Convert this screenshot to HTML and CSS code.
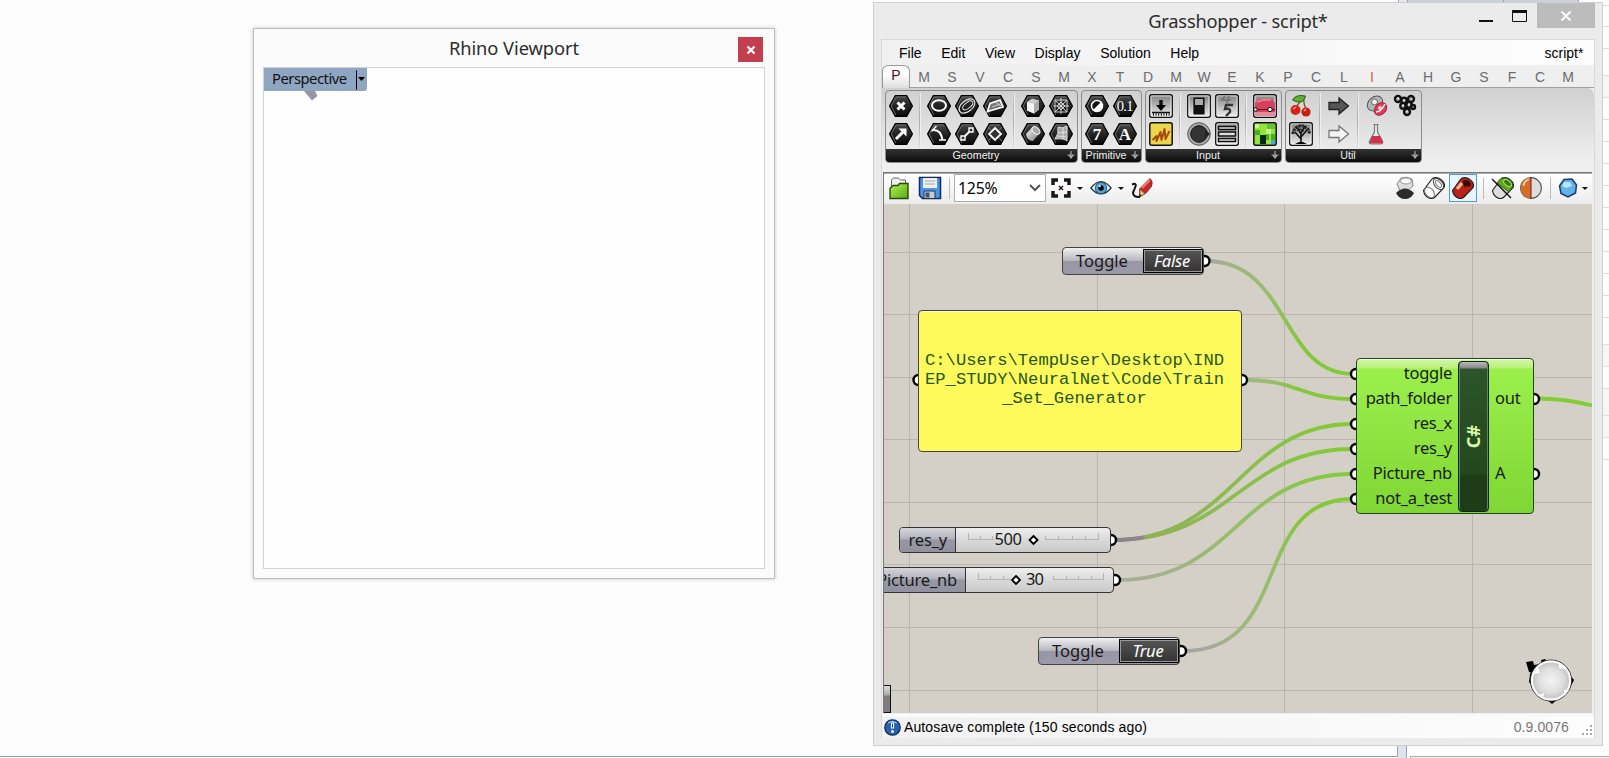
FILE: index.html
```html
<!DOCTYPE html>
<html lang="en">
<head>
<meta charset="utf-8">
<title>Grasshopper - script*</title>
<link rel="stylesheet" href="styles.css">
</head>
<body>
<svg class="defs" width="0" height="0">
  <defs>
    <linearGradient id="hexFill" x1="0" y1="0" x2="0" y2="1"><stop offset="0" stop-color="#4a4a4a"/><stop offset=".45" stop-color="#262626"/><stop offset="1" stop-color="#0a0a0a"/></linearGradient>
    <linearGradient id="tileFill" x1="0" y1="0" x2="0" y2="1"><stop offset="0" stop-color="#808080"/><stop offset="1" stop-color="#f0f0f0"/></linearGradient>
    <linearGradient id="metal" x1="0" y1="0" x2="1" y2="1"><stop offset="0" stop-color="#fff"/><stop offset="1" stop-color="#777"/></linearGradient>
    <linearGradient id="greenFill" x1="0" y1="0" x2="1" y2="1"><stop offset="0" stop-color="#b4ef52"/><stop offset="1" stop-color="#57ab16"/></linearGradient>
    <symbol id="hex" viewBox="0 0 24 24"><path d="M6.300 1.600h11.400L23.400 12l-5.700 10.400H6.300L.6 12z" fill="url(#hexFill)" stroke="#000" stroke-width="1.200"/><path d="M6.800 21 2.300 12 7 3h10" fill="none" stroke="#777" stroke-width=".8"/></symbol>
    <symbol id="tile" viewBox="0 0 24 24"><rect x=".8" y=".8" width="22.400" height="22.400" rx="2" fill="url(#tileFill)" stroke="#111" stroke-width="1.500"/><rect x="1.900" y="1.900" width="20.200" height="20.200" rx="1" fill="none" stroke="#fff" stroke-width=".8"/></symbol>
    <symbol id="tube" viewBox="0 0 24 24"><path d="M1.500 14.500 9.500 3.500Q11 1.500 14 1.700q6.500 1 8.500 7 .3 2-1 3.500L13 21q-2 2-5 1.300-5.500-1.500-6.500-7.800z" stroke="#222" stroke-width="1.200" stroke-linejoin="round"/></symbol>
  </defs>
</svg>

<div class="desktop">
  <div class="backdrop">
    <div class="strip-top"><i></i><b></b><b></b></div>
    <div class="sheet"><i class="r21"></i><i class="r22"></i><i class="r27"></i><i class="r22 tint"></i><i class="r22"></i><i class="r22"></i><i class="r22"></i><i class="r22"></i><i class="r22"></i><i class="r22"></i><i class="r22"></i><i class="r22"></i><i class="r22"></i><i class="r22"></i><i class="r27"></i><i class="r22 tint"></i><i class="r22"></i><i class="r27 tint"></i><i class="r22 tint"></i><i class="r22"></i><i class="r22"></i></div>
    <div class="strip-bottom"><i></i><b></b><u></u></div>
  </div>

  <section class="rhino">
    <header class="rhino-bar"><span class="rhino-title">Rhino Viewport</span>
      <span class="rhino-close"><svg width="10" height="10" viewBox="0 0 10 10"><path d="M1.500 1.500l7 7M8.500 1.500l-7 7" stroke="#fff" stroke-width="2.200"/></svg></span></header>
    <div class="rhino-view">
      <div class="view-tag"><span>Perspective</span><svg width="11" height="23" viewBox="0 0 11 23"><path d="M.5 2.500v19" stroke="#000"/><path d="M2 9h7L5.500 13z"/></svg></div>
      <svg class="view-nub" width="16" height="10" viewBox="0 0 16 10"><path d="M1 0h11l2.500 5L9 9.500z" fill="#9895a3"/></svg>
    </div>
  </section>

  <section class="gh">
    <header class="gh-bar"><span class="gh-title">Grasshopper - script*</span>
      <div class="controls">
        <svg width="14" height="12" viewBox="0 0 14 12"><path d="M0 10h14" stroke="#111" stroke-width="2"/></svg>
        <svg width="16" height="13" viewBox="0 0 16 13"><path d="M.5 1v10.500h14V1" fill="none" stroke="#111"/><path d="M0 1.500h15" stroke="#111" stroke-width="3"/></svg>
        <span class="gh-close"><svg width="12" height="10" viewBox="0 0 12 10"><path d="M1.500.5l9 9M10.500.5l-9 9" stroke="#fff" stroke-width="2"/></svg></span>
      </div></header>

    <div class="gh-inner">
      <nav class="menu"><span>File</span><span>Edit</span><span>View</span><span>Display</span><span>Solution</span><span>Help</span><span class="doc">script*</span></nav>
      <div class="tabs"><span class="on">P</span><span>M</span><span>S</span><span>V</span><span>C</span><span>S</span><span>M</span><span>X</span><span>T</span><span>D</span><span>M</span><span>W</span><span>E</span><span>K</span><span>P</span><span>C</span><span>L</span><span class="warm">I</span><span>A</span><span>H</span><span>G</span><span>S</span><span>F</span><span>C</span><span>M</span></div>

      <div class="ribbon">
        <div class="group">
          <div class="icons">
            <div class="col one">
              <svg viewBox="0 0 24 24"><use href="#hex"/><path d="M8.500 8.500l7 7M15.500 8.500l-7 7" stroke="#fff" stroke-width="3"/></svg>
              <svg viewBox="0 0 24 24"><use href="#hex"/><path d="M7 17l7-7" stroke="#fff" stroke-width="3"/><path d="M9.500 6.500h8v8z" fill="#fff"/></svg>
            </div><i class="sep"></i>
            <div class="col three">
              <svg viewBox="0 0 24 24"><use href="#hex"/><ellipse cx="12" cy="11.500" rx="7" ry="5.300" fill="none" stroke="#fff" stroke-width="2"/></svg>
              <svg viewBox="0 0 24 24"><use href="#hex"/><g fill="none" stroke="#ddd" transform="rotate(-38 12 12)"><ellipse cx="12" cy="12" rx="9" ry="5.500" stroke-width="1.300"/><ellipse cx="13" cy="12" rx="6" ry="2.800"/></g></svg>
              <svg viewBox="0 0 24 24"><use href="#hex"/><path d="M4.500 17.500 7 9.500 17 6l3 7z" fill="#777" stroke="#fff" stroke-width="1.700"/><path d="M12 8l6 4M9 13l8-3" stroke="#ddd" stroke-width=".8"/></svg>
              <svg viewBox="0 0 24 24"><use href="#hex"/><path d="M5 8q9-1 10.500 10" fill="none" stroke="#fff" stroke-width="2"/><path d="M9.500 4 4.500 9.500M12 18h7" stroke="#fff" stroke-width="1.400" fill="none"/></svg>
              <svg viewBox="0 0 24 24"><use href="#hex"/><path d="M8 16l8-8" stroke="#fff" stroke-width="2"/><path d="M6 14h4v4H6zM14 6h4v4h-4z" fill="#333" stroke="#fff" stroke-width="1.400"/></svg>
              <svg viewBox="0 0 24 24"><use href="#hex"/><path d="M5 5l14 14M19 5 5 19" stroke="#777" stroke-width="1"/><path d="M12 6l6 6-6 6-6-6z" fill="#333" stroke="#fff" stroke-width="1.800"/></svg>
            </div><i class="sep"></i>
            <div class="col two">
              <svg viewBox="0 0 24 24"><use href="#hex"/><path d="M6 8l5-3.500 7 2v9l-5 4-7-3z" fill="#ccc"/><path d="M6 8l7 2v9.500l-7-3z" fill="#f4f4f4"/><path d="M13 10l5-3.500v9l-5 4z" fill="#aaa"/></svg>
              <svg viewBox="0 0 24 24"><use href="#hex"/><path d="M6 6h12v12H6zM4 12h16M12 4v16M6 6l12 12M18 6 6 18M12 8l4 4-4 4-4-4z" fill="none" stroke="#ddd" stroke-width=".9"/></svg>
              <svg viewBox="0 0 24 24"><use href="#hex"/><path d="M5 12l7-7.500q6 0 7 6L12 19q-6 0-7-7z" fill="url(#metal)"/><ellipse cx="15" cy="8.500" rx="4.500" ry="3" transform="rotate(45 15 8.500)" fill="#aaa" stroke="#eee"/></svg>
              <svg viewBox="0 0 24 24"><use href="#hex"/><path d="M9 5q5 2 9-1v15q-3-3-12-2 4-5 3-12z" fill="#aaa" stroke="#ddd"/><path d="M14 6v11M9 11l9-1M8 14l10 1" stroke="#eee" stroke-width=".8"/></svg>
            </div>
          </div>
          <footer><span>Geometry</span><svg class="plus" viewBox="0 0 8 8"><path d="M4 0v7M.5 4h7M2 4.500l2 2.500 2-2.500" fill="none" stroke="#aaa" stroke-width="1.200"/></svg></footer>
        </div>

        <div class="group">
          <div class="icons"><div class="col two">
            <svg viewBox="0 0 24 24"><use href="#hex"/><circle cx="12" cy="12" r="5.500" fill="#111" stroke="#fff" stroke-width="1.500"/><path d="M16 8a5.500 5.500 0 0 1-8 8z" fill="#fff"/></svg>
            <svg viewBox="0 0 24 24"><use href="#hex"/><text class="glyph small" x="11.700" y="17">0.1</text></svg>
            <svg viewBox="0 0 24 24"><use href="#hex"/><text class="glyph" x="12" y="18">7</text></svg>
            <svg viewBox="0 0 24 24"><use href="#hex"/><text class="glyph" x="12" y="18">A</text></svg>
          </div></div>
          <footer><span>Primitive</span><svg class="plus" viewBox="0 0 8 8"><path d="M4 0v7M.5 4h7M2 4.500l2 2.500 2-2.500" fill="none" stroke="#aaa" stroke-width="1.200"/></svg></footer>
        </div>

        <div class="group">
          <div class="icons">
            <div class="col one">
              <svg viewBox="0 0 24 24"><use href="#tile"/><path d="M12 6v6" stroke="#111" stroke-width="3.500"/><path d="M7 11h10L12 17z"/><path d="M3 18.500h18" stroke="#111" stroke-width="1.500"/><path d="M4 20.500h17" stroke="#111" stroke-width="2.500" stroke-dasharray="1 1.600"/></svg>
              <svg viewBox="0 0 24 24"><rect x=".8" y=".8" width="22.400" height="22.400" rx="2" fill="#ead54c" stroke="#111" stroke-width="1.500"/><path d="M3.500 18l4-4 0 5 4-9 1 8 3-11 1 10 4-8" fill="none" stroke="#aa4b0b" stroke-width="2" stroke-linejoin="round"/></svg>
            </div><i class="sep"></i>
            <div class="col two">
              <svg viewBox="0 0 24 24"><use href="#tile"/><path d="M7 4h10v16H7z" fill="#111" stroke="#111" stroke-width="1.200"/><path d="M8 5h8v6H8z" fill="#aaa"/></svg>
              <svg viewBox="0 0 24 24"><use href="#tile"/><path d="M10 2 7 6h9M14 2l-2 7" fill="none" stroke="#777" stroke-width="2"/><path d="M18 11h-7l-1 4q6-1 5 3l-4 4" fill="none" stroke="#333" stroke-width="2.400"/></svg>
              <svg viewBox="0 0 24 24"><circle cx="12" cy="12" r="11.300" fill="#aaa" stroke="#555"/><circle cx="12" cy="12" r="8.300" fill="#333" stroke="#111"/><path d="M18 7l5 5-5 5z" fill="#222"/></svg>
              <svg viewBox="0 0 24 24"><use href="#tile"/><path d="M3.500 4.500h17v3h-17zM3.500 10h17v4h-17zM3.500 16.500h17v3h-17z" fill="#ddd" stroke="#111" stroke-width="1.500"/></svg>
            </div><i class="sep"></i>
            <div class="col one">
              <svg viewBox="0 0 24 24"><use href="#tile"/><path d="M2 9q2-4 5-4h12l3 4v13H2z" fill="#d7405d"/><path d="M4 8q6-3 14-2" stroke="#ed7890" stroke-width="2" fill="none"/><path d="M2 15.500h20" stroke="#5d1020"/><path d="M2 18h20v4H2z" fill="#e58a9b"/><circle cx="2.500" cy="15.500" r="1.800" fill="#fff" stroke="#000"/><circle cx="17" cy="15.500" r="2.200" fill="#fff" stroke="#000"/></svg>
              <svg viewBox="0 0 24 24"><rect x=".8" y=".8" width="22.400" height="22.400" rx="2" fill="#93e53d" stroke="#111" stroke-width="1.500"/><path d="M2 2h4v4H2zM13 7h5v5h-5z" fill="#c4fa90"/><path d="M7 13h6v9H7z" fill="#08270b"/><path d="M2 8h5v5H2zM18 12h4v6h-4zM13 12h3v6h-3z" fill="#49ad22"/><path d="M14 2h8v5h-8z" fill="#63c52f"/><path d="M18 18h4v4h-4z" fill="#4da7db"/></svg>
            </div>
          </div>
          <footer><span>Input</span><svg class="plus" viewBox="0 0 8 8"><path d="M4 0v7M.5 4h7M2 4.500l2 2.500 2-2.500" fill="none" stroke="#aaa" stroke-width="1.200"/></svg></footer>
        </div>

        <div class="group">
          <div class="icons">
            <div class="col one">
              <svg viewBox="0 0 24 24"><path d="M7 14q2-5 8-10-1 6 3 13" fill="none" stroke="#66511c" stroke-width="1.200"/><path d="M3.500 6q3-6 13-4-2 7-7 6-3 0-6-2z" fill="#5dae32" stroke="#24630e"/><circle cx="6.500" cy="16" r="5" fill="#d32516"/><circle cx="17" cy="18" r="4.600" fill="#c81d12"/><path d="M4 15l3-2M15 17l2-2" stroke="#ff9d8d" stroke-width="1.500"/></svg>
              <svg viewBox="0 0 24 24"><use href="#tile"/><path d="M12 22V10M12 17l-6-7M12 15l6-7M12 12 8 5M12 11l4-7" stroke="#111" stroke-width="1.600"/><path d="M4 12q0-4 4-7 6-3 9 1 4 2 3 6" fill="none" stroke="#222" stroke-width="3" stroke-dasharray="2.500 .7"/><path d="M8 9l3-2 4 2" fill="none" stroke="#222" stroke-width="1.500"/><path d="M10 20h4l4 2H6z"/></svg>
            </div><i class="sep"></i>
            <div class="col one">
              <svg viewBox="0 0 24 24"><path d="M2 8.500h10V4l9.500 8-9.500 8v-4.500H2z" fill="#555" stroke="#222" stroke-width="1.300"/></svg>
              <svg viewBox="0 0 24 24"><path d="M2 8.500h10V4l9.500 8-9.500 8v-4.500H2z" fill="#f4f4f4" stroke="#777" stroke-width="1.300"/></svg>
            </div><i class="sep"></i>
            <div class="col two">
              <svg viewBox="0 0 24 24"><ellipse cx="10" cy="9.500" rx="8.500" ry="6.500" transform="rotate(-40 10 9.500)" fill="#b5b5b5" stroke="#555"/><circle cx="9.500" cy="8" r="3" fill="#eee" stroke="#666"/><ellipse cx="15.500" cy="15" rx="7" ry="5.300" transform="rotate(-45 15.500 15)" fill="#dc4059" stroke="#a51c32"/><path d="M11 18q5 0 9-8" stroke="#fff" fill="none" stroke-width="1.400"/><circle cx="15" cy="14" r="2" fill="#ffd0d8"/></svg>
              <svg viewBox="0 0 24 24"><g fill="#bbb" stroke="#111" stroke-width="2.400"><circle cx="5" cy="5" r="3"/><circle cx="11" cy="6.500" r="2.700"/><circle cx="18" cy="5" r="3"/><circle cx="10" cy="12" r="2.700"/><circle cx="16" cy="11" r="2.700"/><circle cx="20" cy="13" r="2"/><circle cx="14" cy="18" r="3"/></g><path d="M4 4h2M10 6h2M9 11h2M13 17h2M15 10h2" stroke="#fff"/></svg>
              <svg viewBox="0 0 24 24"><path d="M8.500 2.500h5M9.500 3v7L4.500 19q-1 3 2 3h9q3 0 2-3l-5-9V3" fill="#eee" stroke="#777" stroke-width="1.200"/><path d="M7 14h8l3 6q0 1.500-2 1.500H6q-2 0-1-2z" fill="#cf334b"/></svg>
            </div>
          </div>
          <footer><span>Util</span><svg class="plus" viewBox="0 0 8 8"><path d="M4 0v7M.5 4h7M2 4.500l2 2.500 2-2.500" fill="none" stroke="#aaa" stroke-width="1.200"/></svg></footer>
        </div>
      </div>

      <div class="work">
        <div class="toolbar">
          <svg class="t-open" width="20" height="24" viewBox="0 0 20 24"><path d="M2.500 15V4l2-2h5l2 2h5v10" fill="#eee" stroke="#666"/><path d="M1 12.500 4 9.500h5l1.500-2H19v15H1z" fill="url(#greenFill)" stroke="#254d0b" stroke-width="1.400"/></svg>
          <svg class="t-save" width="24" height="24" viewBox="0 0 24 24"><path d="M1.500 1.500h21v21h-18l-3-3z" fill="#4897e8" stroke="#16295a" stroke-width="1.500"/><path d="M5 2h14v10H5z" fill="#eee"/><path d="M7 5h10M7 8h10" stroke="#aaa"/><path d="M6 15h11v7.500H6z" fill="#ccc" stroke="#223054"/><path d="M7.500 16.500h4v5h-4z" fill="#3e5478"/></svg>
          <i class="vbar"></i>
          <div class="combo"><span>125%</span><svg width="12" height="8" viewBox="0 0 12 8"><path d="M1 1l5 5 5-5" fill="none" stroke="#555" stroke-width="2"/></svg></div>
          <svg class="t-fit" width="20" height="20" viewBox="0 0 20 20"><path d="M2 7V2h5M13 2h5v5M18 13v5h-5M7 18H2v-5" fill="none" stroke="#1c1515" stroke-width="3.400"/><path d="M8 8l4 4M12 8l-4 4" stroke="#222" stroke-width="1.500"/></svg>
          <i class="drop d1"></i>
          <svg class="t-eye" width="22" height="18" viewBox="0 0 24 18"><path d="M1 9Q12-5 23 9 12 22 1 9z" fill="#e8f5fd" stroke="#263847" stroke-width="1.400"/><circle cx="12" cy="9" r="6.200" fill="#55a5da" stroke="#224a78"/><circle cx="12" cy="9" r="3"/><circle cx="10.500" cy="7" r="1.200" fill="#fff"/></svg>
          <i class="drop d2"></i>
          <svg class="t-pen" width="22" height="24" viewBox="0 0 22 24"><path d="M1 8.500q5-2 3.500 2T2 16.500q0 5 7 4.500" fill="none" stroke="#111" stroke-width="2"/><path d="M8.500 21l0-8L19 2.500q3.500 3 1.500 8L15 17z" fill="#c8282b" stroke="#6e1f1b" stroke-width=".8"/><path d="M11 12l8-8" stroke="#ee8166" stroke-width="1.800"/><path d="M8.500 21l.3-7.500 5.200 4z" fill="#e8b886" stroke="#6e3a20" stroke-width=".5"/><path d="M8.500 21v-3l2 1.500z"/></svg>
          <i class="fill"></i>
          <div class="right-tools">
            <svg width="24" height="24" viewBox="0 0 24 24"><path d="M4 8 8 2q6-2 11 1l1 7-6 5H7z" fill="#ddd" stroke="#888"/><ellipse cx="13" cy="5" rx="5.500" ry="3" fill="#fafafa" stroke="#999"/><path d="M3 17q9-9 18 0-3 6-9 6t-9-6z" fill="#2c2c2c"/></svg>
            <svg width="24" height="24" viewBox="0 0 24 24"><use href="#tube" fill="#fafafa"/><ellipse cx="16.500" cy="8" rx="6.500" ry="4" transform="rotate(50 16.500 8)" fill="none" stroke="#444"/><ellipse cx="16.500" cy="8" rx="4" ry="2" transform="rotate(50 16.500 8)" fill="none" stroke="#777"/><ellipse cx="7.500" cy="16.500" rx="6" ry="4" transform="rotate(50 7.500 16.500)" fill="none" stroke="#777"/></svg>
            <span class="chosen"><svg width="24" height="24" viewBox="0 0 24 24"><use href="#tube" fill="#b92218"/><path d="M12 5q5-3 8 3l-1 3-4-1-1 2-2-4z" fill="#3a0705"/><path d="M6 13l5-6" stroke="#ffb383" stroke-width="3.500"/></svg></span>
            <i class="vbar"></i>
            <svg width="24" height="24" viewBox="0 0 24 24"><use href="#tube" fill="#ddd"/><path d="M6 7 10 2.500q3-1.500 7 .5 5 3 5 7l-4 6z" fill="#5fa91d" stroke="#245811"/><ellipse cx="16.500" cy="7" rx="4.500" ry="2.600" transform="rotate(40 16.500 7)" fill="#3d7a12" stroke="#b5e36d"/><path d="M1 3l19 19" stroke="#111" stroke-width="1.500"/></svg>
            <svg width="24" height="24" viewBox="0 0 22 22"><circle cx="11" cy="11" r="9.500" fill="#ddd" stroke="#555"/><path d="M11 1.500a9.500 9.500 0 0 0 0 19z" fill="#d66b2a"/><path d="M4 9q1-5 5-6" stroke="#ffc08d" stroke-width="2" fill="none"/><path d="M11 1v20" stroke="#702b13"/></svg>
            <i class="vbar"></i>
            <svg width="20" height="20" viewBox="0 0 20 20"><path d="M6 1.500 14 1l4.500 6-1 8L10 19l-7-3.500L1.500 8z" fill="#62b1e9" stroke="#193a6d" stroke-width="1.500"/><path d="M6 4h6l2 4-6 2-4-2z" fill="#b7e4fd"/></svg>
            <i class="drop d3"></i>
          </div>
        </div>

        <div class="canvas">
          <div class="plane">
            <svg class="wires" width="1609" height="758" viewBox="0 0 1609 758">
              <defs>
                <linearGradient id="wireA" gradientUnits="userSpaceOnUse" x1="1205" y1="0" x2="1353" y2="0"><stop offset="0" stop-color="#a5a5a2"/><stop offset=".15" stop-color="#a3b487"/><stop offset=".45" stop-color="#98bd6c"/><stop offset=".65" stop-color="#84c73a"/><stop offset="1" stop-color="#82cc34"/></linearGradient>
                <linearGradient id="wireB" gradientUnits="userSpaceOnUse" x1="1114" y1="0" x2="1353" y2="0"><stop offset="0" stop-color="#8a8388"/><stop offset=".12" stop-color="#8c8889"/><stop offset=".13" stop-color="#8fb057"/><stop offset=".5" stop-color="#8cbd50"/><stop offset="1" stop-color="#82cc34"/></linearGradient>
                <linearGradient id="wireC" gradientUnits="userSpaceOnUse" x1="1114" y1="0" x2="1353" y2="0"><stop offset="0" stop-color="#a9a9a6"/><stop offset=".15" stop-color="#a3b18c"/><stop offset=".5" stop-color="#98bd6c"/><stop offset="1" stop-color="#82cc34"/></linearGradient>
              </defs>
              <path class="grid" d="M909.500 204v509M1097.500 204v509M1284.500 204v509M1472.500 204v509M884 252.500h708M884 314.500h708M884 377.500h708M884 439.500h708M884 502.500h708M884 564.500h708M884 627.500h708M884 690.500h708"/>
              <g class="wire">
                <path stroke="url(#wireA)" d="M1206 261C1290 261 1280 374 1353 374"/>
                <path stroke="url(#wireA)" d="M1244 380C1300 380 1300 399 1353 399"/>
                <path stroke="url(#wireB)" d="M1113 540C1234 540 1240 424 1353 424"/>
                <path stroke="url(#wireB)" d="M1113 540C1234 540 1240 449 1353 449"/>
                <path stroke="url(#wireC)" d="M1118 580C1236 580 1236 474 1353 474"/>
                <path stroke="url(#wireA)" d="M1183 651C1294 651 1250 499 1353 499"/>
                <path stroke="#84cc34" d="M1536 398.500q30 0 56 7"/>
              </g>
              <g class="grip">
                <circle cx="1204.500" cy="261" r="5"/><circle cx="1242" cy="380" r="5"/><circle cx="918.500" cy="380" r="5"/><circle cx="1111" cy="540" r="5"/><circle cx="1115" cy="580" r="5"/><circle cx="1181" cy="651" r="5"/>
                <circle cx="1356" cy="374" r="5"/><circle cx="1356" cy="399" r="5"/><circle cx="1356" cy="424" r="5"/><circle cx="1356" cy="449" r="5"/><circle cx="1356" cy="474" r="5"/><circle cx="1356" cy="499" r="5"/><circle cx="1534" cy="399" r="5"/><circle cx="1534" cy="474" r="5"/>
              </g>
            </svg>

            <div class="node toggle at-false"><span>Toggle</span><b>False</b></div>
            <div class="panel">C:\Users\TempUser\Desktop\IND<br>EP_STUDY\NeuralNet\Code\Train<br>_Set_Generator</div>
            <div class="script">
              <div class="ins"><span>toggle</span><span>path_folder</span><span>res_x</span><span>res_y</span><span>Picture_nb</span><span>not_a_test</span></div>
              <div class="core"><span>C#</span></div>
              <div class="outs"><span>out</span><span>A</span></div>
            </div>
            <div class="node slider at-res"><span class="name">res_y</span><svg width="154" height="24" viewBox="0 0 154 24"><path class="ticks" d="M12.500 5v7M24.500 8v4M36.500 8v4M89.500 8v4M102.500 8v4M116.500 8v4M129.500 8v4M142.500 5v7M12 11.500h26M89 11.500h54"/><path class="knob" d="M77.500 8l4 4-4 4-4-4z"/><text x="38.500" y="17" textLength="27.500">500</text></svg></div>
            <div class="node slider at-pic"><span class="name">Picture_nb</span><svg width="147" height="24" viewBox="0 0 147 24"><path class="ticks" d="M12.500 5v7M24.500 8v4M37.500 8v4M87.500 8v4M100.500 8v4M112.500 8v4M125.500 8v4M137.500 5v7M12 11.500h33M87 11.500h51"/><path class="knob" d="M50 8l4 4-4 4-4-4z"/><text x="60" y="17" textLength="18">30</text></svg></div>
            <div class="node toggle at-true"><span>Toggle</span><b>True</b></div>
            <div class="stub"></div>
            <svg class="compass" width="52" height="50" viewBox="0 0 52 50">
              <defs><radialGradient id="ball"><stop offset="0" stop-color="#f4f4f4"/><stop offset=".6" stop-color="#dedede"/><stop offset="1" stop-color="#bbb"/></radialGradient></defs>
              <path d="M1 5l7-1 1 4 6-1-6 7-2 2-3-1zM16 3l4-1 3 4-6 2zM5 17l5-6-3 18-3-4zM22 43h10l-5 4zM45 18l4 5-3 6z"/>
              <circle cx="26" cy="23.500" r="20.500" fill="url(#ball)" stroke="#333"/><circle cx="26" cy="23.500" r="19" fill="none" stroke="#fff" stroke-width="2"/>
              <path d="M9 17l4-7 2 6zM34 6l6 6-6-1zM44 33l-4 5-1-5zM14 38l5-2-1 5z" fill="#fff"/>
            </svg>
          </div>
        </div>
      </div>

      <footer class="status"><svg width="17" height="17" viewBox="0 0 17 17"><circle cx="8.500" cy="8.500" r="7.700" fill="#2762af" stroke="#102b5e" stroke-width="1.300"/><path d="M4 4q4-3 9 0" stroke="#8dc6f0" stroke-width="1.300" fill="none"/><path d="M8.500 3.500v6" stroke="#fff" stroke-width="3.200"/><path d="M8.500 4.500v4" stroke="#1d4f96"/><circle cx="8.500" cy="12.500" r="1.500" fill="#fff"/></svg><span>Autosave complete (150 seconds ago)</span><em>0.9.0076</em><svg class="resize" width="11" height="11" viewBox="0 0 11 11"><path d="M8 0h2v2H8zM4 4h2v2H4zM8 4h2v2H8zM0 8h2v2H0zM4 8h2v2H4zM8 8h2v2H8z" fill="#aaa"/></svg></footer>
    </div>
  </section>
</div>
</body>
</html>
```

FILE: styles.css
```css
* { box-sizing: border-box; }
body { margin: 0; background: #fdfdfd; font-family: "Liberation Sans", Arial, sans-serif; }
svg { display: block; flex: none; }
.defs { position: absolute; }
.desktop { position: relative; width: 1609px; height: 758px; overflow: hidden; }

/* windows behind */
.backdrop { height: 758px; display: grid; grid-template-rows: 2px 1fr 13px; }
.strip-top { display: flex; padding-left: 1398px; }
.strip-top i { width: 9px; background: #e3e7ee; border-left: 1px solid #9aa5ba; }
.strip-top b { width: 96px; background: #cdd2d8; border-left: 1px solid #9aa5b0; }
.strip-top b + b { width: 76px; border-right: 1px solid #9aa5ba; }
.sheet { margin-left: 1603px; display: flex; flex-direction: column; padding-top: 3px; overflow: hidden; }
.sheet i { flex: none; border-top: 1px solid #dcdfe5; }
.r21 { height: 21px; }
.r22 { height: 22px; }
.r27 { height: 27px; }
.tint { background: #f6f6f7; }
.strip-bottom { display: flex; }
.strip-bottom i { width: 1398px; border-right: 1px solid #9aa5ba; border-bottom: 1px solid #8e9bb5; height: 12px; }
.strip-bottom b { width: 9px; background: #dfe3eb; border-right: 1px solid #9aa5ba; }
.strip-bottom u { flex: 1; margin: 11px 0 0 3px; border-top: 1px solid #aaa; border-left: 1px solid #aaa; background: #f2f2f2; }

/* Rhino viewport */
.rhino { position: absolute; left: 253px; top: 28px; width: 522px; height: 551px; background: #fbfbfb; border: 1px solid #bdbdbd; box-shadow: 0 0 4px rgba(0,0,0,.22); padding: 0 9px 9px; display: flex; flex-direction: column; }
.rhino-bar { height: 38px; display: flex; align-items: center; justify-content: center; position: relative; }
.rhino-title, .gh-title { font: 18.300px "Noto Sans", sans-serif; color: #2c2c2c; white-space: nowrap; }
.rhino-title { letter-spacing: -.05px; margin: -2px 0 0; }
.rhino-close { position: absolute; right: 2px; top: 8px; width: 25px; height: 25px; background: #c23f50; display: grid; place-items: center; }
.rhino-view { flex: 1; border: 1px solid #d2d2d2; background: #fefefe; }
.view-tag { width: 103px; height: 23px; background: #8ea6c1; border-bottom-right-radius: 3px; display: flex; justify-content: space-between; }
.view-tag span { padding-left: 8px; font: 14.800px/21px "Noto Sans", sans-serif; letter-spacing: -.5px; color: #111; }
.view-nub { margin-left: 39px; }

/* Grasshopper */
.gh { position: absolute; left: 873px; top: 2px; width: 730px; height: 744px; background: #ebebeb; border: 1px solid #cfcfcf; padding: 0 7px; }
.gh-bar { height: 36px; display: flex; justify-content: center; position: relative; }
.gh-title.gh-title { line-height: 35px; margin-right: 0; letter-spacing: -.22px; }
.controls { position: absolute; right: 0; top: 0; display: flex; gap: 19px; }
.controls > svg { margin: 7px -1px 0 1px; }
.controls > svg:first-child { margin-top: 8px; }
.gh-close { width: 58px; height: 25px; background: #bcbcbc; display: grid; place-items: center; margin-left: -9px; }
.gh-close svg { margin-right: 1px; }
.gh-inner { height: 699px; border: 1px solid #d8d8d8; background: #efefef; }
.menu { height: 25px; display: flex; gap: 20px; padding: 0 11px 0 17px; font-size: 14px; line-height: 26px; background: linear-gradient(90deg,#f0f0f0,#fdfdfd); }
.menu span { margin-right: -.4px; }
.menu .doc { margin-left: auto; }
.tabs { height: 23px; display: flex; font-size: 14px; line-height: 24px; color: #6c6c6c; background: linear-gradient(#a0a0a0,#a0a0a0) 0 100%/100% 1px no-repeat; }
.tabs span { width: 28px; text-align: center; }
.tabs .on { width: 28px; line-height: 19px; color: #501020; background: linear-gradient(#fff 40%,#ddd); border: 1px solid #999; border-bottom: 0; border-radius: 6px 6px 0 0; }
.tabs .warm { color: #c9683f; }
.ribbon { height: 84px; display: flex; gap: 3px; padding: 2px 0 0 3px; background: linear-gradient(#d0d0d0,#efefef 88%); border-top-right-radius: 7px; }
.group { height: 73px; border: 1px solid #8c8c8c; border-radius: 4px; background: linear-gradient(#d0d0d0,#f0f0f0); overflow: hidden; display: flex; flex-direction: column; }
.icons { flex: 1; display: flex; padding: 1px 2px 0 1px; }
.col { display: grid; grid-auto-rows: 28px; justify-items: center; align-items: center; }
.col svg { width: 24px; height: 24px; }
.one { grid-template-columns: 28px; }
.two { grid-template-columns: 28px 28px; }
.three { grid-template-columns: repeat(3,28px); }
.sep { width: 1px; margin: 1px 5px 1px 4px; background: linear-gradient(#ccc,#aaa 50%,#ddd); box-shadow: 1px 0 #eee; }
.group footer { height: 13px; background: linear-gradient(#333,#0c0c0c); color: #eee; font: 10.700px/12px "Liberation Sans", sans-serif; display: flex; align-items: center; justify-content: center; position: relative; padding: 0 11px 1px 0; }
.plus { position: absolute; right: 2px; top: 2px; width: 8px; height: 8px; }
.glyph { font: bold 17px "Liberation Serif", serif; fill: #fff; text-anchor: middle; }
.glyph.small { font-size: 14.500px; font-weight: 400; letter-spacing: -.7px; }
.work { margin-left: 1px; width: 709px; height: 541px; border-left: 1px solid #777; border-top: 1px solid #777; }
.toolbar { height: 31px; display: flex; align-items: center; background: linear-gradient(#fff,#ececec); padding: 0 0 2px 5px; border-top: 1px solid #aaa; }
.t-save { margin-left: 9px; }
.vbar { width: 1px; height: 21px; background: #bbb; }
.toolbar > .vbar { margin: 0 4px 0 7px; }
.combo { width: 92px; height: 28px; border: 1px solid #adadad; background: #fff; display: flex; align-items: center; justify-content: space-between; padding: 0 4px 0 3px; font: 15.800px "Noto Sans", sans-serif; letter-spacing: -.2px; }
.t-fit { margin-left: 5px; }
.drop { border: 3px solid transparent; border-top-color: #111; border-bottom: 0; width: 6px; height: 3px; }
.d1 { margin: 0 7px 0 6px; }
.d2 { margin: 0 7px 0 6px; }
.fill { flex: 1; }
.right-tools { display: flex; align-items: center; gap: 4px; padding-right: 4px; }
.right-tools .vbar { margin: 0 3px; }
.right-tools > svg:first-child { margin-right: 1px; }
.chosen { width: 28px; height: 28px; border: 1px solid #4b9fe0; background: #eaf4fc; display: grid; place-items: center; margin: 0 -1px; }
.canvas { height: 509px; overflow: hidden; position: relative; background: #d4d0c8; }
.plane { position: absolute; left: -884px; top: -204px; width: 1609px; height: 758px; font: 16.500px "Noto Sans", sans-serif; color: #1a1a1a; }
.wires { position: absolute; left: 0; top: 0; }
.grid { stroke: #b9b6af; fill: none; }
.wire { fill: none; stroke-width: 3.800; }
.grip { fill: #fff; stroke: #000; stroke-width: 2.400; }
.node { position: absolute; display: flex; border: 1.500px solid #333; border-radius: 4px; overflow: hidden; white-space: nowrap; }
.toggle { width: 142px; height: 28px; background: linear-gradient(#f0f0f0,#b8b8c0 48%,#9895a4 50%,#9c9aa8); border-color: #444; line-height: 25px; }
.toggle span { flex: 1; padding-left: 13px; }
.toggle b { width: 60px; margin: 1px 0 1px 1px; background: linear-gradient(#555,#333); border: 1px solid #000; box-shadow: inset 0 0 0 1px #999; color: #fff; font-weight: 400; font-style: italic; text-align: center; padding-right: 2px; line-height: 21px; letter-spacing: -.2px; }
.at-false { left: 1062px; top: 247px; }
.at-true { left: 1038px; top: 637px; }
.panel { position: absolute; left: 918px; top: 310px; width: 324px; height: 142px; background: #fffa5c; border: 1.500px solid #444; border-radius: 4px; box-shadow: inset 0 1px #fffbd0; padding: 40px 11px 0 0; text-align: center; font: 17.200px/19px "Liberation Mono", monospace; color: #24581a; white-space: nowrap; }
.script { position: absolute; left: 1356px; top: 358px; width: 178px; height: 156px; display: flex; border: 1.500px solid #22451b; border-radius: 4px; background: linear-gradient(#d2f5a8,#b9f07c 9px,#9bf04c 10px,#80d634); box-shadow: inset 0 1px #eefadf; line-height: 25px; }
.ins { width: 95px; padding-top: 1px; display: flex; flex-direction: column; align-items: flex-end; white-space: nowrap; letter-spacing: -.25px; }
.core { width: 31px; margin: 2px 0 1px 6px; border: 1.500px solid #10250c; border-radius: 4px; background: linear-gradient(#bbb,#888 6px,#2d542b 7px,#24471f 75%,#1c3d18 77%); display: grid; place-items: center; box-shadow: inset 1px 0 #678060, inset -1px 0 #678060; }
.core span { writing-mode: vertical-rl; transform: rotate(180deg); font-weight: 700; color: #d9f8a8; font-size: 18px; }
.outs { padding: 26px 0 0 6px; display: flex; flex-direction: column; gap: 50px; letter-spacing: -.2px; }
.slider { height: 26px; background: linear-gradient(#eee,#d9d9d9 50%,#cacaca); }
.slider .name { background: linear-gradient(#d5d5da,#b2b3bd 45%,#9898a5 50%,#9291a0); border-right: 1.500px solid #333; line-height: 23px; text-align: right; padding-right: 8px; letter-spacing: -.2px; }
.slider text { font-size: 16.500px; fill: #1a1a1a; }
.ticks { fill: none; stroke: #b5b5b5; }
.knob { fill: #fff; stroke: #000; stroke-width: 1.800; }
.at-res { left: 899px; top: 527px; width: 212px; }
.at-res .name { width: 56px; }
.at-pic { left: 861px; top: 567px; width: 253px; }
.at-pic .name { width: 104px; }
.stub { position: absolute; left: 880px; top: 685px; width: 11px; height: 28px; border: 1px solid #111; background: linear-gradient(#ddd,#aaa 35%,#817b80 38%); }
.compass { position: absolute; left: 1525px; top: 657px; }
.status { height: 24px; margin-top: 1px; display: flex; align-items: center; background: linear-gradient(90deg,#f1f1f1,#fdfdfd); border-top: 3px solid #fafafa; padding: 0 1px 1px 2px; font-size: 14px; }
.status span { margin: -1px 0 0 3px; letter-spacing: .12px; }
.status em { margin: -1px 0 0 auto; font-style: normal; color: #777; letter-spacing: .1px; }
.resize { margin: 6px 0 0 13px; }
```
